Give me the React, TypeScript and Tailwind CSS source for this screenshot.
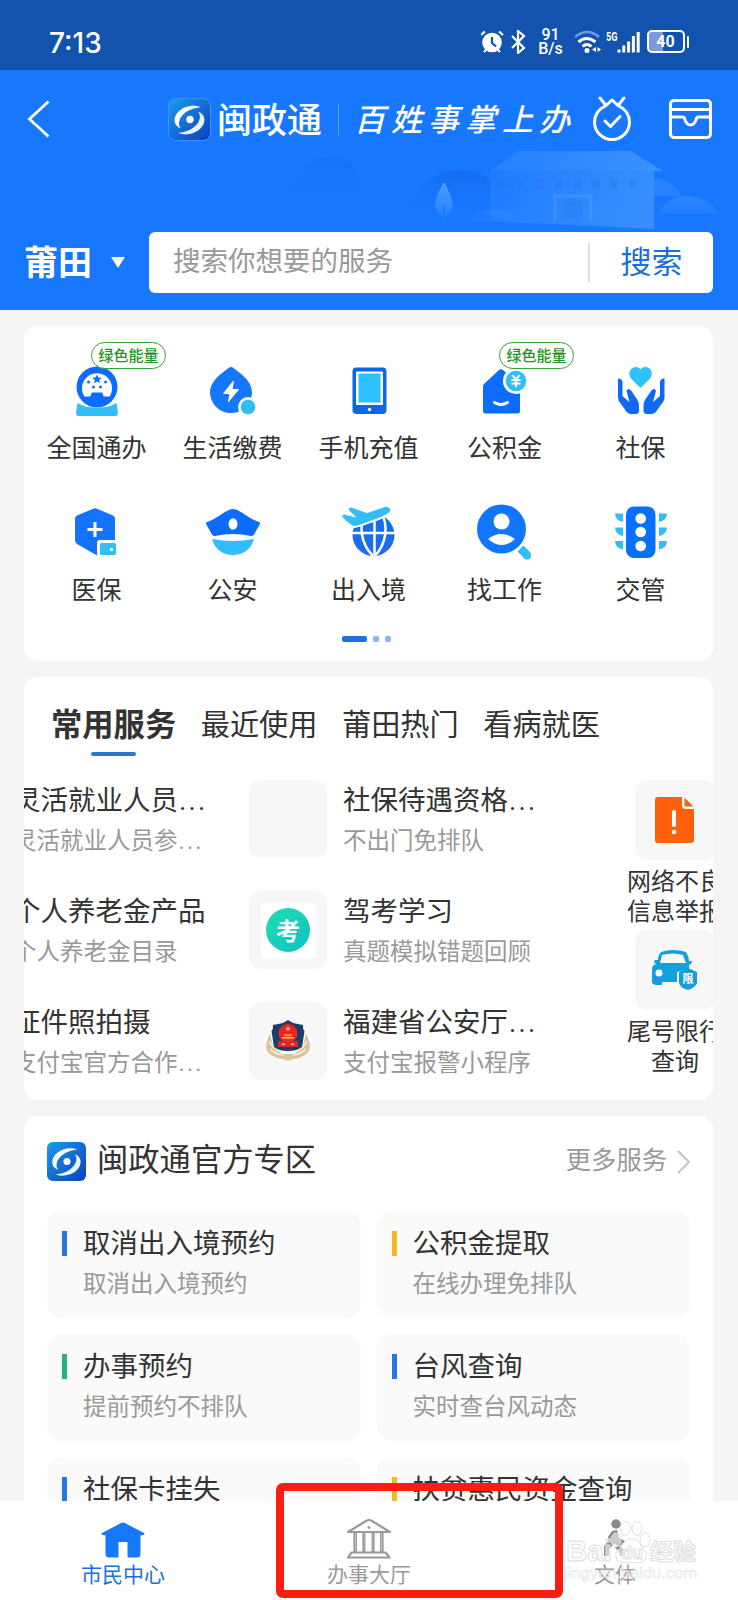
import type { ReactNode } from "react";
import clsx from "clsx";

const BLUE = "#0b6cff";
const CYAN = "#33bdf5";

const SERVICES: { label: string; badge?: boolean; icon: ReactNode }[] = [
  {
    label: "全国通办",
    badge: true,
    icon: (
      <>
        <path d="M8.5 41C20 47.500 36 47.500 47.500 41L49 51a3 3 0 0 1-3 3H10a3 3 0 0 1-3-3Z" fill={CYAN} />
        <circle cx="28" cy="25" r="20.500" fill={BLUE} />
        <path d="M15.500 34.500a15 15 0 1 1 25 0h-5.800l-1.500-4h-10.400l-1.500 4Z" fill="#fff" />
        <path d="m28 12.500 1.400 3 3.300.3-2.500 2.200.7 3.200-2.900-1.700-2.900 1.700.7-3.200-2.500-2.200 3.300-.3Z" fill={BLUE} />
        <g fill={BLUE}>
          <circle cx="19.500" cy="20" r="1.500" />
          <circle cx="36.500" cy="20" r="1.500" />
          <circle cx="24.500" cy="25" r="1.500" />
          <circle cx="31.500" cy="25" r="1.500" />
        </g>
      </>
    ),
  },
  {
    label: "生活缴费",
    icon: (
      <>
        <path d="M26 5c1.500 0 2.500.9 3.500 1.800C39 14 47 20.500 47 30.500a21 20.500 0 0 1-42 0C5 20.500 13 14 22.500 6.800 23.500 5.900 24.500 5 26 5Z" fill="#1576ff" />
        <path d="m28.500 19-10 12.500h6.500l-1.500 8 10-12h-6.500Z" fill="#fff" stroke="#fff" strokeLinejoin="round" />
        <circle cx="43" cy="45" r="10" fill="#fff" />
        <circle cx="43" cy="45" r="7.300" fill={CYAN} />
      </>
    ),
  },
  {
    label: "手机充值",
    icon: (
      <>
        <rect x="11.500" y="5.500" width="34" height="46.500" rx="4" fill="#0b67e8" />
        <rect x="15" y="9.500" width="27" height="33.500" rx="1" fill="#fff" />
        <rect x="17.500" y="11.500" width="22" height="29" fill="#2fc0ff" />
        <circle cx="28.500" cy="47.500" r="1.700" fill="#fff" />
      </>
    ),
  },
  {
    label: "公积金",
    badge: true,
    icon: (
      <>
        <path d="M22 8q2-1.600 4 0l17 15v26a2.500 2.500 0 0 1-2.500 2.500h-32A2.500 2.500 0 0 1 6 49V24.500q0-1.500 1-2.500Z" fill={BLUE} />
        <path d="M17.500 40.500q6.500 4 13 0" fill="none" stroke="#fff" strokeWidth="3" strokeLinecap="round" />
        <circle cx="39" cy="19" r="13" fill="#fff" />
        <circle cx="39" cy="19" r="10.300" fill={CYAN} />
        <path d="m35.500 13 3.500 4.500 3.500-4.500M39 17.500V25M34.500 18h9M34.500 21.500h9" fill="none" stroke="#fff" strokeWidth="2" />
      </>
    ),
  },
  {
    label: "社保",
    icon: (
      <>
        <path d="M27.500 26 18 16.500C12.500 9 22 1 27.500 7.500 33 1 43 9 37 16.500Z" fill="#2fc0ff" />
        <path id="hand" d="M5 17.500q0-1.500 1.500-1 2.500.8 3 3V34l7 6-3-11q1.500-4 5 0l6 9q1.800 3 1.500 6.500v4.500q-.3 3-3 3h-4.500c-3 0-5.500-2-6.500-4.500L6.500 40Q5 38 5 35Z" fill="#1069f5" />
        <use href="#hand" transform="translate(56.500) scale(-1 1)" />
      </>
    ),
  },
  {
    label: "医保",
    icon: (
      <>
        <path d="M23.500 5q2.500-1.500 5 0L44 11.500q2 1 2 3V36H31q-3 0-3 3v12.500L8 40q-2-1.300-2-4V14.500q0-2 2-3Z" fill="#1373ff" />
        <path d="M26 18v15M18.500 25.500h15" stroke="#fff" strokeWidth="3" />
        <rect x="31" y="39" width="16" height="12" rx="1.500" fill={CYAN} />
        <circle cx="42.500" cy="45.500" r="1.800" fill="#fff" />
      </>
    ),
  },
  {
    label: "公安",
    icon: (
      <>
        <path d="M25 5.600q3-1.200 6 0c9 3.500 13 9.400 23 12.400 1 .4 1.300 1.300.8 2.200L49 30.500Q48 32 46 32q-18-4-36 0-2 0-3-1.500L1.200 20.200C.7 19.300 1 18.400 2 18c10-3 14-8.900 23-12.400Z" fill={BLUE} />
        <ellipse cx="28" cy="20" rx="4.500" ry="5.800" fill="#fff" />
        <path d="M7 35q21 4 42 0C46 45.500 38 51 28 51S10 45.500 7 35Z" fill="#2fbdfd" />
      </>
    ),
  },
  {
    label: "出入境",
    icon: (
      <>
        <circle cx="32.500" cy="31" r="21" fill="#1a6dee" />
        <path d="M10 29h46M33.500 10v43" stroke="#fff" strokeWidth="2.500" />
        <path d="M25 8c-8 14-5 32 7 44M40 8c8 14 5 32-6 44" fill="none" stroke="#fff" strokeWidth="2.500" />
        <path d="M3 10.500q8 2 12.500 3L8 6q-1-2 2-2.500L26 9 44 3q6-.5 5 4-2 4-20 10Q17 22 13 22 8 20 2 13.500 0 11 3 10.500Z" fill="#33bdf5" stroke="#fff" strokeWidth="4" paintOrder="stroke" />
      </>
    ),
  },
  {
    label: "找工作",
    icon: (
      <>
        <circle cx="24.500" cy="25" r="24.500" fill="#1275ff" />
        <circle cx="24.500" cy="17.500" r="8" fill="#fff" />
        <path d="M11 35q13.500-10 27 0-13 12-27 0Z" fill="#fff" />
        <path d="m43.500 44.500 7 7" stroke={CYAN} strokeWidth="8.500" />
        <circle cx="50" cy="51.500" r="4" fill={CYAN} />
      </>
    ),
  },
  {
    label: "交管",
    icon: (
      <>
        <rect x="13" y="2.500" width="29.500" height="51.500" rx="8" fill="#0870ff" />
        <g fill="#fff">
          <circle cx="27.700" cy="14.500" r="5.300" />
          <circle cx="27.700" cy="28" r="5.300" />
          <circle cx="27.700" cy="42" r="5.300" />
        </g>
        <path d="M10 9.500v8.500Q2.500 17 2 9.500ZM10 23.500V32Q2.500 31 2 23.500ZM10 37v8.500Q2.500 44.500 2 37ZM46 9.500v8.500q7.500-1 8-8.500ZM46 23.500V32q7.500-1 8-8.500ZM46 37v8.500q7.500-1 8-8.500Z" fill={CYAN} />
      </>
    ),
  },
];

const TABS = ["常用服务", "最近使用", "莆田热门", "看病就医"];

const LEFT_ITEMS = [
  { title: "灵活就业人员...", sub: "灵活就业人员参..." },
  { title: "个人养老金产品", sub: "个人养老金目录" },
  { title: "证件照拍摄", sub: "支付宝官方合作..." },
];

const MID_ITEMS: { title: string; sub: string; icon?: ReactNode }[] = [
  { title: "社保待遇资格...", sub: "不出门免排队" },
  {
    title: "驾考学习",
    sub: "真题模拟错题回顾",
    icon: (
      <div className="flex size-[55px] items-center justify-center bg-white">
        <span className="flex size-11 items-center justify-center rounded-full bg-gradient-to-br from-[#21dcb4] to-[#0cc3c4] text-[24px] leading-none font-bold text-white">考</span>
      </div>
    ),
  },
  { title: "福建省公安厅...", sub: "支付宝报警小程序", icon: <PoliceBadge /> },
];

const OFFICIAL = [
  { title: "取消出入境预约", sub: "取消出入境预约", bar: "bg-[#2876e2]" },
  { title: "公积金提取", sub: "在线办理免排队", bar: "bg-[#eebb25]" },
  { title: "办事预约", sub: "提前预约不排队", bar: "bg-[#2bb17d]" },
  { title: "台风查询", sub: "实时查台风动态", bar: "bg-[#2876e2]" },
  { title: "社保卡挂失", bar: "bg-[#2876e2]" },
  { title: "扶贫惠民资金查询", bar: "bg-[#eebb25]" },
];

function PoliceBadge() {
  return (
    <svg className="size-11" viewBox="0 0 44 44">
      <path d="M4 15Q-4 30 5 36q7 4 12 4l5 2 5-2q5 0 12-4 9-6 1-21l-3 12-9 8H16l-9-8Z" fill="#d9c398" />
      <path d="M3 22q5 9 13 11M4 30q5 5 13 6M41 22q-5 9-13 11M40 30q-5 5-13 6" fill="none" stroke="#f6ecd4" strokeWidth="1.800" />
      <path d="m22 1 5 3 10 2q-.5 4 1.500 6l-2.500 16q-5 4-14 4T8 28L5.500 12Q7.500 10 7 6l10-2Z" fill="#1d3d69" />
      <circle cx="22" cy="14.500" r="9.500" fill="#e9252c" />
      <path d="m12 22 10 1.500L32 22v6H12Z" fill="#e9252c" />
      <path d="m22 7 .8 2h2l-1.600 1.300.6 2-1.800-1.200-1.800 1.200.6-2L19.200 9h2ZM16 18h12v1.500H16Zm2-2.500h8v1.200h-8ZM16 24.500h3V26h-3Zm9 0h3V26h-3Z" fill="#f6c94b" />
    </svg>
  );
}

function LogoMark({ className }: { className?: string }) {
  return (
    <svg className={className} viewBox="0 0 40 40">
      <defs>
        <linearGradient id="logo-bg" x1="0" y1="0" x2="1" y2="1">
          <stop offset="0" stopColor="#1d9bea" />
          <stop offset="1" stopColor="#0b3fbe" />
        </linearGradient>
      </defs>
      <rect width="40" height="40" rx="6" fill="url(#logo-bg)" />
      <path d="M31 8C20 3 5 11 5.500 21c0 4 3 6.500 6 7.500C6 21 15 9 31 8Z" fill="#fff" />
      <path d="M9 33c11 5 26-3 25.500-13 0-4-3-6.500-6-7.500C34 20 25 32 9 33Z" fill="#e7f4ff" />
      <circle cx="20.500" cy="20" r="3.600" fill="#fff" />
    </svg>
  );
}

function StatusBar() {
  return (
    <div className="flex h-[70px] items-center bg-[#1153ae] pt-[13px] pr-[49px] pl-[49px] text-white">
      <span className="mt-[2px] font-[Inter] text-[28px] leading-none font-medium">7:13</span>
      <svg className="ml-auto h-6 w-[48px]" viewBox="0 0 48 24" fill="none" stroke="#fff">
        <circle cx="11" cy="12.500" r="9.800" fill="#fff" stroke="none" />
        <path d="m0 5 4-3.500M22 5l-4-3.500M3 22l2-2M19 22l-2-2" strokeWidth="2.200" />
        <path d="M11 7v6l4 3.500" stroke="#1153ae" strokeWidth="2.200" />
        <path d="m31 6 12 12-6 5V1l6 5-12 12" strokeWidth="2.200" />
      </svg>
      <div className="ml-[9px] w-[26px] text-center font-[Roboto] text-[16px] leading-[14px] font-medium whitespace-nowrap">
        91<br />B/s
      </div>
      <svg className="ml-[11px] h-[26px] w-[68px]" viewBox="0 0 68 26" fill="none" stroke="#fff">
        <path d="M0 8q12-10 24 0" strokeWidth="2.400" stroke="#6a9be6" />
        <path d="M3.500 13q8-7 17 0M7.500 17.500q4.500-4 9 0" strokeWidth="3" />
        <circle cx="12" cy="21.500" r="2.500" fill="#fff" stroke="none" />
        <path d="m17 20.500 4-2.500v5ZM26 20.500 22.500 18v5Z" fill="#fff" stroke="none" />
        <path d="M44 23.500v-3M48.800 23.500v-7M53.600 23.500v-11M58.400 23.500V7M63.200 23.500V3" strokeWidth="3" />
        <text x="31" y="12" fill="#fff" stroke="none" fontSize="13" fontWeight="700" fontFamily="Roboto" textLength="11.500" lengthAdjust="spacingAndGlyphs">5G</text>
      </svg>
      <div className="ml-[4px] flex h-[23px] w-[38px] items-center justify-center rounded-[5px] border-2 border-white bg-gradient-to-r from-[#7d9ad8] from-40% to-[#1153ae] to-40% font-[Roboto] text-[16px] leading-none font-bold">
        40
      </div>
      <span className="ml-[2px] h-3 w-[2.500px] rounded bg-white" />
    </div>
  );
}

// faint tulou and tree skyline behind the search row
function Skyline() {
  return (
    <svg className="absolute top-[76px] left-[250px] h-[90px] w-[480px]" viewBox="0 0 480 90">
      <defs>
        <linearGradient id="sky" x1="0" y1="0" x2="0" y2="1">
          <stop offset="0" stopColor="#4ea0ff" />
          <stop offset="1" stopColor="#4ea0ff" stopOpacity="0.150" />
        </linearGradient>
        <linearGradient id="hill" x1="0" y1="0" x2="0" y2="1">
          <stop offset="0" stopColor="#156bec" />
          <stop offset="1" stopColor="#1777ff" stopOpacity="0" />
        </linearGradient>
        <linearGradient id="wall" x1="0" y1="0" x2="1" y2="0.200">
          <stop offset="0" stopColor="#1f7dff" />
          <stop offset="1" stopColor="#4698ff" />
        </linearGradient>
      </defs>
      <path d="M25 65 50 30Q62 10 82 10q20 0 25 20l20 40H20Z" fill="url(#hill)" opacity=".4" />
      <path d="M152 75q20-55 65-50 20 2 25 15v35Z" fill="url(#hill)" opacity=".8" />
      <path d="M240 25 268 5h113l32 20h-9v58l-164-8Z" fill="url(#wall)" opacity=".7" />
      <path d="M240 25 268 5h113l32 20Z" fill="#53a2ff" opacity=".15" />
      <path d="M249 38h145" stroke="#2877ed" strokeWidth="10" strokeDasharray="8 10.500" opacity=".35" />
      <path d="M305 75V50h36v25" fill="none" stroke="#5ba8ff" strokeWidth="3" opacity=".35" />
      <path d="M314 72V55h18v17" fill="#2877ed" opacity=".25" />
      <path d="M194 36q-10 16-9 25 3 8 9 8t9-8q0-9-9-25ZM193 60h2v15h-2Z" fill="url(#sky)" />
      <path d="M215 76q27-25 58 0ZM409 68q6-18 29-18 22 2 30 18Z" fill="url(#sky)" opacity=".4" />
      <path d="M404 32q20 2 28 18h-28Z" fill="#4698ff" opacity=".35" />
    </svg>
  );
}

function Header() {
  return (
    <header className="relative h-[240px] bg-[#1777ff] text-white">
      <Skyline />
      <div className="relative flex h-[98px] items-center pr-[26px] pl-[27px]">
        <svg className="h-[38px] w-[23px]" viewBox="0 0 23 38" fill="none" stroke="#fff" strokeWidth="2.800">
          <path d="M21.500 1.500 2.500 19l19 17.500" />
        </svg>
        <LogoMark className="ml-[119px] size-[41px] rounded-[7px] ring-1 ring-[#3b92ff]" />
        <span className="ml-[7px] pb-[4px] text-[35px] leading-none font-medium whitespace-nowrap">闽政通</span>
        <span className="ml-[16px] h-8 w-px bg-[#5ea2ff]" />
        <span className="ml-[15px] w-[220px] pt-[2px] font-['Liberation_Serif','Noto_Sans_CJK_SC',serif] text-[31px] leading-none font-medium tracking-[6px] whitespace-nowrap italic">百姓事掌上办</span>
        <svg className="ml-[18px] h-[46px] w-[40px] shrink-0" viewBox="0 0 40 46" fill="none" stroke="#fff" strokeWidth="3" strokeLinecap="round" strokeLinejoin="round">
          <path d="M14 9.500 20 4l6 5.500C33 13 37.500 19 37.500 26a17.500 17.500 0 0 1-35 0C2.500 19 7 13 14 9.500L8 2M26 9.500 32 2M13 25l5.500 5.500 9.500-10" />
        </svg>
        <svg className="ml-auto h-[40px] w-[43px] shrink-0" viewBox="0 0 43 40" fill="none" stroke="#fff" strokeWidth="3" strokeLinejoin="round">
          <rect x="1.500" y="1.500" width="40" height="37" rx="3.500" />
          <path d="M1.500 10.500h40M1.500 18h12q2 0 2.500 3 2 5 5.500 5t5.500-5q.5-3 2.500-3h12" />
        </svg>
      </div>
      <div className="relative mt-[64px] flex h-[61px] items-center pr-[25px] pl-[24px]">
        <span className="pb-[4px] text-[34px] leading-none font-bold">莆田</span>
        <svg className="ml-[19px] h-[11px] w-[14px]" viewBox="0 0 14 11"><path d="M0 0h14L7 11Z" fill="#fff" /></svg>
        <div className="ml-auto flex h-[61px] w-[564px] items-center rounded-[6px] bg-white pl-[24px]">
          <span className="pb-[5px] text-[27.500px] leading-none text-[#999]">搜索你想要的服务</span>
          <span className="ml-auto h-[39px] w-[2px] bg-[#ddd]" />
          <span className="w-[123px] pb-[6px] text-center text-[31px] leading-none text-[#1a6fdc]">搜索</span>
        </div>
      </div>
    </header>
  );
}

function ServiceGrid() {
  return (
    <section className="h-[335px] rounded-[14px] bg-white px-[4.500px] pt-[36px]">
      <div className="grid grid-cols-5 gap-y-[43px]">
        {SERVICES.map(({ label, badge, icon }) => (
          <div key={label} className="relative flex flex-col items-center">
            <svg className="size-14" viewBox="0 0 56 56">{icon}</svg>
            <span className="mt-[13px] text-[25px] leading-[30px] text-[#333]">{label}</span>
            {badge && (
              <span className="absolute -top-[20px] left-[62.500px] flex h-[27px] w-[75px] items-center justify-center rounded-full border border-[#35a035] bg-white pb-[2px] text-[15px] leading-none font-medium whitespace-nowrap text-[#1f931f]">
                绿色能量
              </span>
            )}
          </div>
        ))}
      </div>
      <div className="mt-[33px] mr-[5px] flex justify-center gap-[6px]">
        <span className="h-[6px] w-[25px] rounded-[2px] bg-[#1f71e2]" />
        <span className="size-[6px] rounded-[2px] bg-[#8bb6ed]" />
        <span className="size-[6px] rounded-[2px] bg-[#8bb6ed]" />
      </div>
    </section>
  );
}

// truncated strings end in baseline dots, spaced wider than the text font sets them
function Truncated({ text }: { text: string }) {
  const cut = text.endsWith("...");
  return (
    <>
      {cut ? text.slice(0, -3) : text}
      {cut && <span className="pl-px font-[Roboto] leading-none tracking-[2.200px]">...</span>}
    </>
  );
}

function ItemText({ title, sub }: { title: string; sub?: string }) {
  return (
    <div className="-mt-[2px] whitespace-nowrap">
      <p className="h-[40px] text-[27.500px] leading-[40px] text-[#333]"><Truncated text={title} /></p>
      {sub && <p className="mt-px h-[40px] text-[23.500px] leading-[40px] text-[#999]"><Truncated text={sub} /></p>}
    </div>
  );
}

function CommonServices() {
  return (
    <section className="h-[423px] overflow-hidden rounded-[14px] bg-white">
      <div className="flex h-[103px] gap-[24.500px] pt-[25px] pl-[27px]">
        {TABS.map((tab, i) => (
          <div key={tab} className="flex flex-col items-center">
            <span className={clsx("whitespace-nowrap text-[#333]", i === 0 ? "text-[31.300px] leading-[42px] font-bold" : "text-[29.200px] leading-[40px]")}>{tab}</span>
            {i === 0 && <span className="mt-[8px] h-1 w-[45px] rounded-full bg-[#2876cd]" />}
          </div>
        ))}
      </div>
      <div className="flex">
        <div className="-ml-[11px] flex w-[236px] shrink-0 flex-col gap-[32px]">
          {LEFT_ITEMS.map((item) => <ItemText key={item.title} {...item} />)}
        </div>
        <div className="flex w-[378px] shrink-0 flex-col gap-[31px]">
          {MID_ITEMS.map(({ title, sub, icon }) => (
            <div key={title} className="flex h-20 gap-4">
              <div className="flex size-[78px] items-center justify-center rounded-[12px] bg-[#f7f7f7]">{icon}</div>
              <ItemText title={title} sub={sub} />
            </div>
          ))}
        </div>
        <div className="flex w-24 shrink-0 flex-col items-center text-center text-[24px] leading-[30px] whitespace-nowrap text-[#333]">
          <div className="flex size-20 items-center justify-center rounded-[12px] bg-[#f7f7f7]">
            <svg className="h-[48px] w-[40px]" viewBox="0 0 40 48">
              <path d="M3 1h24v8q0 4 4 4h8v31a3 3 0 0 1-3 3H3a3 3 0 0 1-3-3V4a3 3 0 0 1 3-3Z" fill="#ff600b" />
              <path d="M29.500 1.500v9h9Z" fill="#ee6a28" />
              <path d="M19 16v13" stroke="#fff" strokeWidth="4" strokeLinecap="round" />
              <circle cx="19" cy="36" r="2.300" fill="#fff" />
            </svg>
          </div>
          <p className="mt-[5px]">网络不良<br />信息举报</p>
          <div className="mt-[5px] flex size-20 items-center justify-center rounded-[12px] bg-[#f7f7f7]">
            <svg className="h-[42px] w-[48px]" viewBox="0 0 48 42">
              <path d="M10 3q12-4 25 0 3 5 3 9h3q0 3-3 4v4l-12 3v10H11v3H4l-3-2V20q0-4 4-5l-2-2 1-2h3q0-5 3-8Zm1 3-2 8h26l-3-8q-10-3-21 0Z" fill="#139fe0" />
              <circle cx="8" cy="24" r="3.500" fill="#fff" />
              <path d="m37 19 9 4v11q-2 5-9 7-8-2-9-7V23Z" fill="#139fd6" />
              <text x="31.500" y="34" fontSize="11" fontWeight="700" fill="#fff">限</text>
            </svg>
          </div>
          <p className="mt-[5px]">尾号限行<br />查询</p>
        </div>
      </div>
    </section>
  );
}

function OfficialZone() {
  return (
    <section className="rounded-[14px] bg-white px-[23px] pt-[23px]">
      <div className="flex h-[44px] items-center">
        <LogoMark className="size-[39px]" />
        <h2 className="ml-[11px] pb-[6px] text-[31.300px] leading-none text-[#333]">闽政通官方专区</h2>
        <span className="ml-auto pb-[5px] text-[25.300px] leading-none text-[#999]">更多服务</span>
        <svg className="mt-[2px] ml-[10px] h-6 w-[13px]" viewBox="0 0 13 24" fill="none" stroke="#c4c4c4" strokeWidth="2">
          <path d="m1 1 11 11L1 23" />
        </svg>
      </div>
      <div className="mt-[28px] grid grid-cols-2 gap-x-4 gap-y-[16px]">
        {OFFICIAL.map(({ title, sub, bar }) => (
          <div key={title} className="flex h-[107px] gap-4 rounded-[14px] bg-[#fafafa] pt-[12px] pl-[15px]">
            <span className={clsx("mt-[8px] h-[25px] w-[5px]", bar)} />
            <ItemText title={title} sub={sub} />
          </div>
        ))}
      </div>
    </section>
  );
}

function Watermark() {
  return (
    <svg className="absolute top-[1518px] left-[564px] h-[66px] w-[138px]" viewBox="0 0 138 66" fontFamily="'Liberation Sans', 'Noto Sans CJK SC', sans-serif" fontWeight="700">
      <g fill="#fff" fillOpacity=".55" stroke="#dedede" strokeWidth="1">
        <text x="2" y="43" fontSize="30" textLength="46" lengthAdjust="spacingAndGlyphs">Bai</text>
        <ellipse cx="52" cy="22" rx="5" ry="7" />
        <ellipse cx="61.500" cy="10.500" rx="5" ry="7" />
        <ellipse cx="73" cy="10.500" rx="5" ry="7" />
        <ellipse cx="81" cy="22" rx="5" ry="7" />
        <path d="M68 21q6 0 10 8 7 6 3 13-4 4-14 2-10 2-14-2-4-7 4-13 4-8 11-8Z" />
        <text x="57" y="41" fontSize="18">du</text>
        <text x="86" y="42" fontSize="23">经验</text>
        <text x="0" y="60" fontSize="15" strokeWidth=".6" stroke="#e6e6e6" fillOpacity=".35" fontWeight="400" textLength="133" lengthAdjust="spacingAndGlyphs">jingyan.baidu.com</text>
      </g>
    </svg>
  );
}

function BottomNav() {
  return (
    <nav className="grid h-[99px] shrink-0 grid-cols-3 bg-white text-[21px] leading-[28px] text-[#999]">
      <div className="flex flex-col items-center pt-[19px] text-[#1a72d9]">
        <svg className="h-[39px] w-[46px]" viewBox="0 0 46 39">
          <path d="M23 2.500q1 0 2 .6L44 13q1 .8 0 1.800l-3.500.7V34q0 3.500-3.500 3.500H27.500V22h-9v15.500H9Q5.500 37.500 5.500 34V15.500L2 14.800Q1 13.800 2 13L21 3.100q1-.6 2-.6Z" fill="#1777ff" />
        </svg>
        <span>市民中心</span>
      </div>
      <div className="flex flex-col items-center pt-[16px]">
        <svg className="h-[42px] w-[46px]" viewBox="0 0 46 42" fill="none" stroke="#999" strokeWidth="2.200" strokeLinejoin="round">
          <path d="M20 4q3-2 6 0l18 11H2ZM8.500 15v21M17.500 15v21M27.500 15v21M36.500 15v21M5.500 35.500h34l4 5H2Z" />
          <path d="M10.500 15v21M19 15v21M26 15v21M34.500 15v21" strokeWidth="1" />
          <circle cx="23" cy="10.500" r="1" fill="#999" strokeWidth="1" />
        </svg>
        <span>办事大厅</span>
      </div>
      <div className="flex flex-col items-center pt-[17px]">
        <svg className="h-[41px] w-[46px]" viewBox="0 0 46 41" fill="#8a8a8a">
          <circle cx="24" cy="6" r="4.700" />
          <path d="m20 13 5-1 2 8 6 3-5 5-6-2-5 5v7h-5V28q5-4 4-9Z" />
          <path d="m25 27 6 3 2 8h-5l-1-5-4-3Z" />
        </svg>
        <span>文体</span>
      </div>
    </nav>
  );
}

export default function App() {
  return (
    <div className="relative flex h-[1600px] w-[738px] flex-col overflow-hidden bg-[#f5f5f5] font-['Noto_Sans_CJK_SC',sans-serif]">
      <StatusBar />
      <Header />
      <main className="flex min-h-0 flex-1 flex-col gap-4 overflow-hidden pt-4 pr-[25px] pl-[24px] *:shrink-0">
        <ServiceGrid />
        <CommonServices />
        <OfficialZone />
      </main>
      <BottomNav />
      <Watermark />
      <div className="absolute top-[1483px] left-[276px] h-[115px] w-[287px] rounded-[7px] border-8 border-[#fc1d10]" />
    </div>
  );
}
